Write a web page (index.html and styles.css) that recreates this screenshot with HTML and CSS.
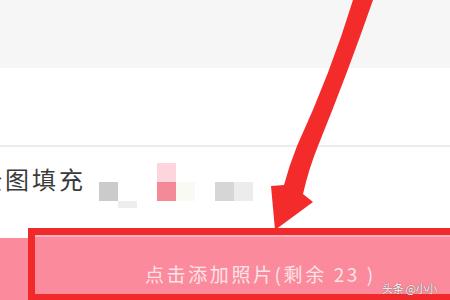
FILE: index.html
```html
<!DOCTYPE html>
<html>
<head>
<meta charset="utf-8">
<link rel="stylesheet" href="styles.css">
</head>
<body>
<div class="page">
  <div class="topbar"></div>
  <div class="blank"></div>
  <div class="fillrow">
    <span class="label">全图填充</span>
    <div class="swatches">
      <div class="sw-col">
        <div class="cell"></div>
        <div class="cell gray"></div>
        <div class="cell"></div>
      </div>
      <div class="sw-col">
        <div class="cell"></div>
        <div class="cell"></div>
        <div class="cell faint"></div>
      </div>
      <div class="sw-col gapl">
        <div class="cell pinklight"></div>
        <div class="cell pink"></div>
        <div class="cell"></div>
      </div>
      <div class="sw-col">
        <div class="cell"></div>
        <div class="cell cream"></div>
        <div class="cell"></div>
      </div>
      <div class="sw-col gapl">
        <div class="cell"></div>
        <div class="cell gray2"></div>
        <div class="cell"></div>
      </div>
      <div class="sw-col">
        <div class="cell"></div>
        <div class="cell gray3"></div>
        <div class="cell"></div>
      </div>
    </div>
  </div>
  <div class="bottom">
    <div class="strip"></div>
    <div class="addbtn">
      <span class="addtext">点击添加照片(剩余 23 )</span>
    </div>
  </div>
  <svg class="arrow" width="450" height="300" viewBox="0 0 450 300">
    <path fill="#f42b2b" d="M353,0 Q331,72 297,146 Q289,166 284,185 L271,186 L275,230 L313,202 L303,194 Q309,168 318,146 Q348,72 373,0 Z"/>
  </svg>
  <div class="watermark">头条 @小小</div>
</div>
</body>
</html>
```

FILE: styles.css
```css
html, body {
  margin: 0;
  padding: 0;
  background: #ffffff;
}
.page {
  position: relative;
  width: 450px;
  height: 300px;
  overflow: hidden;
  font-family: "Noto Sans CJK SC", "Liberation Sans", sans-serif;
}
.topbar {
  height: 68px;
  background: #f6f6f6;
}
.blank {
  height: 77px;
  background: #ffffff;
  border-bottom: 2px solid #ececec;
}
.fillrow {
  height: 81px;
  display: flex;
  align-items: flex-start;
  background: #ffffff;
}
.label {
  margin-left: -22px;
  margin-top: 17px;
  font-size: 24px;
  line-height: 30px;
  letter-spacing: 3px;
  color: #3a3a3a;
}
.swatches {
  display: flex;
  margin-left: 13px;
  margin-top: 16px;
}
.sw-col {
  display: flex;
  flex-direction: column;
}
.gapl {
  margin-left: 20px;
}
.cell {
  width: 19px;
  height: 19px;
}
.cell:last-child {
  height: 7px;
}
.gray { background: #cbcbcb; }
.gray2 { background: #d6d6d6; }
.gray3 { background: #ececec; }
.faint { background: #eeeeee; }
.pinklight { background: #fdd6dd; }
.pink { background: #f48a97; }
.cream { background: #fafaf4; }
.bottom {
  height: 72px;
  display: flex;
}
.strip {
  width: 28px;
  margin-top: 10px;
  background: #fb8a9c;
}
.addbtn {
  flex: 1;
  display: flex;
  align-items: center;
  background: #fb8a9c;
  border-top: 7px solid #f02a2a;
  border-left: 7px solid #f02a2a;
  border-bottom: 6px solid #f02a2a;
  box-shadow: inset 0 2px 0 #fcb3bf;
  padding-left: 110px;
  padding-top: 18px;
  box-sizing: border-box;
}
.addtext {
  font-size: 19px;
  letter-spacing: 2.6px;
  color: #fde3e8;
  white-space: pre;
}
.arrow {
  position: absolute;
  display: block;
  left: 0;
  top: 0;
}
.watermark {
  position: absolute;
  left: 382px;
  top: 281px;
  font-size: 11px;
  line-height: 14px;
  letter-spacing: -0.3px;
  color: #ffffff;
  text-shadow: 0 0 1px #333;
  white-space: nowrap;
}
```
